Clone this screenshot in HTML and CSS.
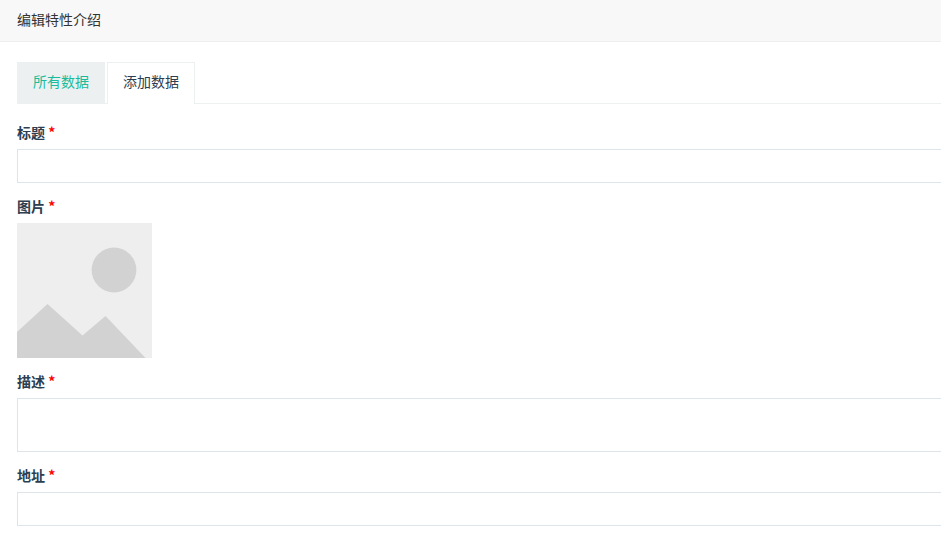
FILE: index.html
```html
<!DOCTYPE html>
<html lang="zh-CN">
<head>
    <meta charset="UTF-8">
    <meta name="viewport" content="width=device-width, initial-scale=1.0">
    <title>编辑特性介绍</title>
    <link rel="stylesheet" href="styles.css">
</head>
<body>
    <header class="panel-heading">
        <h1>编辑特性介绍</h1>
    </header>

    <main class="panel-body">
        <nav class="nav-tabs">
            <a class="tab" href="#all">所有数据</a>
            <a class="tab active" href="#add">添加数据</a>
        </nav>

        <form class="data-form" id="add">
            <div class="form-group">
                <label for="title">标题 <span class="required">*</span></label>
                <input class="form-control" type="text" id="title" name="title" required>
            </div>
            <div class="form-group">
                <label for="picture">图片 <span class="required">*</span></label>
                <button class="thumb" type="button" id="picture">
                    <svg viewBox="0 0 135 135" aria-hidden="true">
                        <rect width="135" height="135" fill="#eeeeee"/>
                        <circle cx="97" cy="47" r="22.4" fill="#d2d2d2"/>
                        <path d="M0 109 L30.5 81 L65.5 112.5 L88.5 93 L128.5 135 H0 Z" fill="#d2d2d2"/>
                    </svg>
                </button>
            </div>
            <div class="form-group">
                <label for="description">描述 <span class="required">*</span></label>
                <textarea class="form-control" id="description" name="description" rows="2" required></textarea>
            </div>
            <div class="form-group">
                <label for="address">地址 <span class="required">*</span></label>
                <input class="form-control" type="text" id="address" name="address" required>
            </div>
        </form>
    </main>
</body>
</html>
```

FILE: styles.css
```css
* {
    box-sizing: border-box;
}
body {
    margin: 0;
    background-color: #fff;
    color: #2c3e50;
    font-family: "Noto Sans CJK SC", "Liberation Sans", sans-serif;
    font-size: 14px;
    line-height: 20px;
}
.panel-heading {
    padding: 9px 17px 12px;
    background-color: #f8f8f8;
    border-bottom: 1px solid #eee;
}
.panel-heading h1 {
    margin: 0;
    color: #333;
    font-size: 14px;
    font-weight: normal;
}
.panel-body {
    padding: 20px 0 20px 17px;
}
.nav-tabs {
    display: flex;
    gap: 2px;
    margin-bottom: 20px;
    border-bottom: 1px solid #ecf0f1;
}
.tab {
    padding: 8px 15px 12px;
    border: 1px solid #ecf0f1;
    border-bottom: 0;
    background-color: #ecf0f1;
    color: #18bc9c;
    text-decoration: none;
}
.tab.active {
    margin-bottom: -1px;
    background-color: #fff;
    color: #2c3e50;
}
.form-group {
    margin-bottom: 15px;
}
label {
    display: block;
    padding-bottom: 9px;
    font-weight: bold;
    line-height: 16px;
}
.required {
    color: #f00;
}
.form-control {
    display: block;
    width: 100%;
    height: 34px;
    padding: 6px 12px;
    border: 1px solid #dce4ec;
    border-right: 0;
    border-radius: 0;
    background-color: #fff;
    color: #2c3e50;
    font: inherit;
}
textarea.form-control {
    height: 54px;
    resize: none;
}
.thumb {
    display: block;
    width: 135px;
    padding: 0;
    border: 0;
    background: none;
    cursor: pointer;
}
.thumb svg {
    display: block;
    width: 100%;
}
```
